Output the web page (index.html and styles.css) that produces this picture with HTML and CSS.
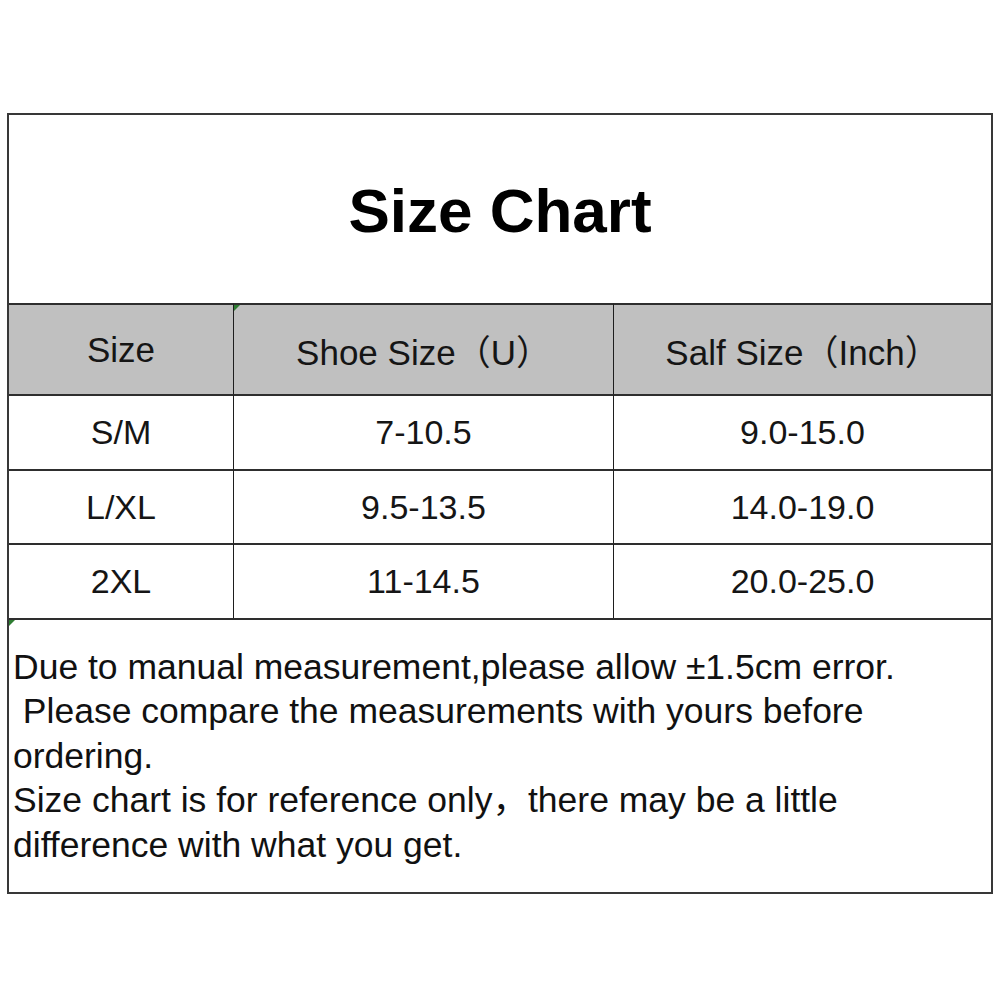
FILE: index.html
```html
<!DOCTYPE html>
<html>
<head>
<meta charset="utf-8">
<title>Size Chart</title>
<link rel="stylesheet" href="styles.css">
</head>
<body>
<div class="chart">
  <div class="title">Size Chart</div>
  <div class="grid">
    <div class="cell head first"><span class="mark"></span>Size</div>
    <div class="cell head"><span class="mark"></span>Shoe Size（U）</div>
    <div class="cell head">Salf Size（Inch）</div>

    <div class="cell first">S/M</div>
    <div class="cell">7-10.5</div>
    <div class="cell">9.0-15.0</div>

    <div class="cell first">L/XL</div>
    <div class="cell">9.5-13.5</div>
    <div class="cell">14.0-19.0</div>

    <div class="cell first">2XL</div>
    <div class="cell">11-14.5</div>
    <div class="cell">20.0-25.0</div>
  </div>
  <div class="notes">
    <span class="mark"></span>
    <p class="line">Due to manual measurement,please allow ±1.5cm error.</p>
    <p class="line">&nbsp;Please compare the measurements with yours before</p>
    <p class="line">ordering.</p>
    <p class="line">Size chart is for reference only，there may be a little</p>
    <p class="line">difference with what you get.</p>
  </div>
</div>
</body>
</html>
```

FILE: styles.css
```css
html, body {
  margin: 0;
  padding: 0;
  background: #ffffff;
}

body {
  font-family: "Liberation Sans", Arial, "Noto Sans CJK SC", sans-serif;
  color: #151515;
}

.chart {
  box-sizing: border-box;
  width: 986px;
  margin: 113px 0 0 7px;
  border: 2px solid #383838;
}

.title {
  height: 188px;
  display: flex;
  align-items: center;
  justify-content: center;
  font-size: 62px;
  font-weight: bold;
  color: #000;
  padding-top: 2px;
  box-sizing: border-box;
}

.grid {
  display: grid;
  grid-template-columns: 224px 380px 1fr;
}

.cell {
  position: relative;
  box-sizing: border-box;
  border-top: 2px solid #2e2e2e;
  border-left: 1.5px solid #1e1e1e;
  height: 74.5px;
  display: flex;
  align-items: center;
  justify-content: center;
  font-size: 34px;
  padding-top: 1px;
}

.cell.first {
  border-left: none;
}

.cell.head {
  height: 91px;
  background: #c0c0c0;
  padding-top: 0;
  font-size: 35px;
}

.mark {
  position: absolute;
  top: 0;
  left: 0;
  width: 0;
  height: 0;
  border-top: 6px solid #2e7d32;
  border-right: 6px solid transparent;
}

.cell.head.first .mark {
  display: none;
}

.notes {
  position: relative;
  box-sizing: border-box;
  border-top: 2px solid #2e2e2e;
  height: 274px;
  padding: 25px 4px 0 4px;
  font-size: 35.5px;
  line-height: 44.5px;
  color: #111;
}

.line {
  margin: 0;
  white-space: pre;
}
```
